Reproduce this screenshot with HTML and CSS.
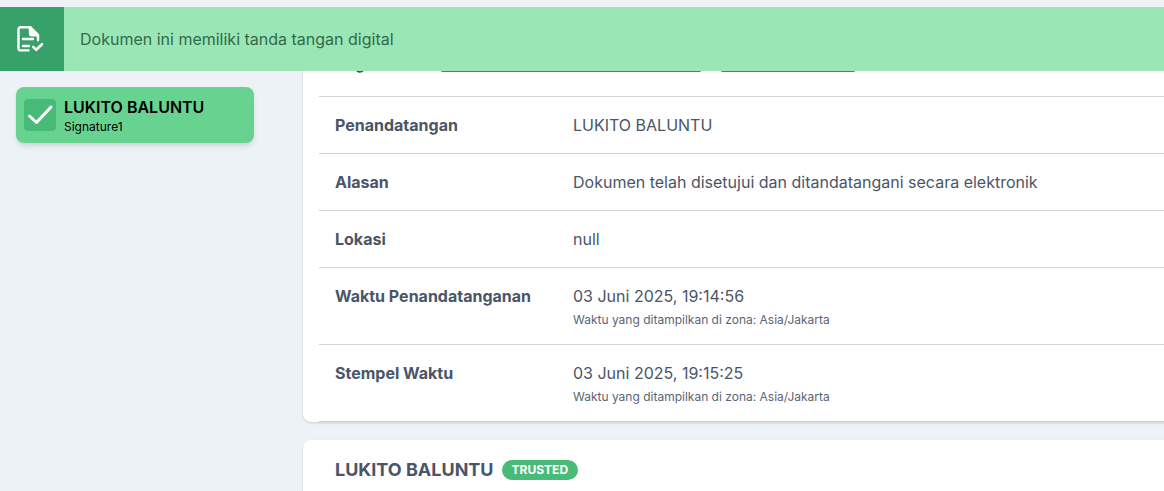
FILE: index.html
```html
<!DOCTYPE html>
<html lang="id">
<head>
<meta charset="utf-8">
<title>Tanda tangan digital</title>
<link rel="stylesheet" href="styles.css">
</head>
<body>
<div class="banner">
  <div class="banner-icon">
    <svg class="doc-icon" viewBox="0 0 32 32" width="32" height="32" fill="none" stroke="#fff" stroke-width="2.400" stroke-linecap="round" stroke-linejoin="round">
      <path d="M12.500 27.400H4.500a2 2 0 0 1-2-2V6.200a2 2 0 0 1 2-2H14l8 8v5"/>
      <path d="M14 4.200l8 8h-6a2 2 0 0 1-2-2z" fill="#fff"/>
      <path d="M7 16h10M7 23h6"/>
      <path d="M17.200 23.800l3 3 5.800-5.600" stroke-width="2.600"/>
    </svg>
  </div>
  <div class="banner-text">Dokumen ini memiliki tanda tangan digital</div>
</div>
<div class="layout">
  <aside class="sidebar">
    <div class="sig-card">
      <div class="sig-check">
        <svg viewBox="0 0 32 32" width="32" height="32" fill="none" stroke="#fff" stroke-width="3" stroke-linecap="round" stroke-linejoin="round"><path d="M5.500 17l7 6.500L27 8"/></svg>
      </div>
      <div class="sig-info">
        <div class="sig-name">LUKITO BALUNTU</div>
        <div class="sig-sub">Signature1</div>
      </div>
    </div>
  </aside>
  <main class="main">
    <section class="card details">
      <div class="row row-first">
        <div class="first-label">Segel</div>
        <span class="pill pill-wide"></span>
        <span class="pill pill-narrow"></span>
      </div>
      <div class="row">
        <div class="label">Penandatangan</div>
        <div class="value">LUKITO BALUNTU</div>
      </div>
      <div class="row">
        <div class="label">Alasan</div>
        <div class="value">Dokumen telah disetujui dan ditandatangani secara elektronik</div>
      </div>
      <div class="row">
        <div class="label">Lokasi</div>
        <div class="value">null</div>
      </div>
      <div class="row">
        <div class="label">Waktu Penandatanganan</div>
        <div class="value">03 Juni 2025, 19:14:56<div class="note">Waktu yang ditampilkan di zona: Asia/Jakarta</div></div>
      </div>
      <div class="row">
        <div class="label">Stempel Waktu</div>
        <div class="value">03 Juni 2025, 19:15:25<div class="note">Waktu yang ditampilkan di zona: Asia/Jakarta</div></div>
      </div>
    </section>
    <section class="card signer">
      <h2 class="signer-name">LUKITO BALUNTU</h2>
      <span class="trusted">TRUSTED</span>
    </section>
  </main>
</div>
</body>
</html>
```
FILE: styles.css
```css
* { box-sizing: border-box; }
html, body { height: 100%; }
body {
  margin: 0;
  overflow: hidden;
  background: #edf2f7;
  font-family: Inter, "Noto Sans", sans-serif;
  font-size: 16px;
  line-height: 24px;
  color: #4a5568;
}
.banner {
  position: absolute;
  top: 7px;
  left: 0;
  right: 0;
  z-index: 5;
  height: 64px;
  display: flex;
  align-items: center;
  background: #9ae6b4;
}
.banner-icon {
  width: 64px;
  height: 64px;
  display: flex;
  align-items: center;
  justify-content: center;
  background: #38a169;
  flex: none;
}
.doc-icon { display: block; }
.banner-text {
  padding-left: 16px;
  color: #33694e;
}
.layout {
  display: flex;
  padding-top: 39px;
  width: 1400px;
}
.sidebar {
  width: 303px;
  flex: none;
  padding: 48px 49px 0 16px;
}
.sig-card {
  display: flex;
  align-items: center;
  gap: 8px;
  height: 56px;
  padding: 0 8px;
  background: #68d391;
  border-radius: 8px;
  box-shadow: 0 4px 6px -1px rgba(0,0,0,.1), 0 2px 4px -1px rgba(0,0,0,.06);
  color: #000;
}
.sig-check {
  width: 32px;
  height: 32px;
  flex: none;
  border-radius: 4px;
  background: #48bb78;
}
.sig-check svg { display: block; }
.sig-info { padding-top: 2px; }
.sig-name {
  font-size: 16px;
  font-weight: 600;
  line-height: 20px;
}
.sig-sub {
  margin-top: 2px;
  font-size: 12px;
  line-height: 16px;
}
.main {
  flex: 1;
  display: flex;
  flex-direction: column;
  gap: 18px;
}
.card {
  background: #fff;
  border-radius: 8px 0 0 8px;
  box-shadow: 0 1px 3px rgba(0,0,0,.1), 0 1px 2px rgba(0,0,0,.06);
}
.details { padding: 0 0 0 16px; }
.row {
  display: flex;
  padding: 16px;
  border-bottom: 1px solid #d1d5db;
}
.row-first {
  height: 58px;
  align-items: flex-end;
  padding: 0 16px 24px;
}
.first-label {
  width: 105px;
  font-weight: 700;
  line-height: 24px;
  margin-bottom: -3px;
}
.pill {
  height: 24px;
  border-radius: 3px;
  background: #2f80c4;
}
.pill-wide { width: 262px; margin-right: 18px; }
.pill-narrow { width: 136px; }
.label {
  width: 238px;
  flex: none;
  font-weight: 700;
}
.note {
  margin-top: 4px;
  font-size: 12px;
  line-height: 16px;
  color: #5a6577;
}
.signer {
  display: flex;
  gap: 8px;
  height: 120px;
  padding: 8px 32px 0;
  align-items: flex-start;
}
.signer-name {
  margin: 8px 0 0;
  font-size: 18px;
  line-height: 28px;
  font-weight: 700;
}
.trusted {
  margin-top: 12px;
  height: 20px;
  padding: 0 10px;
  border-radius: 10px;
  background: #48bb78;
  color: #fff;
  font-size: 12px;
  font-weight: 700;
  line-height: 20px;
}
```
